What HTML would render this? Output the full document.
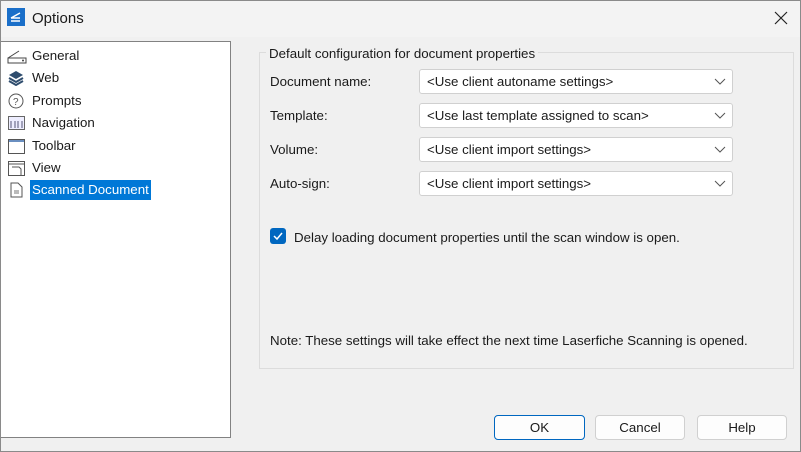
<!DOCTYPE html>
<html><head><style>
*{margin:0;padding:0;box-sizing:border-box}
body{width:801px;height:452px;background:#f0f0f0;font-family:"Liberation Sans",sans-serif;font-size:13.3px;color:#1a1a1a;position:relative;overflow:hidden;border:1px solid #8a8a8a}
.abs{position:absolute}
.title{left:0;top:0;width:799px;height:36px;background:#f3f3f3}
.tree{left:0px;top:40px;width:230px;height:397px;background:#fff;border:1px solid #828282;border-left:none}
.item{position:absolute;left:4px;height:20px;line-height:20px;white-space:nowrap}
.item span{position:absolute;left:25px;padding:0 2px}
.item svg{position:absolute;left:2px;top:2px}
.group{left:258px;top:51px;width:535px;height:317px;border:1px solid #dcdcdc}
.gt{left:265px;top:45px;background:#f0f0f0;padding:0 3px}
.lbl{left:269px}
.combo{left:418px;width:314px;height:25px;background:#fff;border:1px solid #d0d0d0;border-radius:3px;padding-left:7px;line-height:24px}
.combo svg{position:absolute;right:6px;top:8px}
.btn{top:414px;height:25px;background:#fdfdfd;border:1px solid #d0d0d0;border-radius:4px;text-align:center;line-height:24px}
</style></head><body>
<div class="abs title"></div>
<div class="abs" style="left:6px;top:7px;width:18px;height:18px;background:#1a6fc9"><svg width="18" height="18"><path d="M4 10 L13 5 M4 10 L13 10 M4 13 L13 13" stroke="#fff" stroke-width="1.5" fill="none"/></svg></div>
<div class="abs" style="left:31px;top:9px;font-size:15px">Options</div>
<svg class="abs" style="left:773px;top:10px" width="14" height="14"><path d="M1 1 L13 13 M13 1 L1 13" stroke="#222" stroke-width="1.2"/></svg>

<div class="abs tree">
<div class="item" style="top:4px"><svg width="20" height="16"><path d="M1 10 L12 3 M1 10 V15 H19 V10 Z" stroke="#444" fill="none"/><circle cx="16" cy="12.5" r="1" fill="#444"/></svg><span>General</span></div>
<div class="item" style="top:26px"><svg width="20" height="16"><path d="M2 5 L9 1 L16 5 L9 9 Z" fill="#2f4d6e"/><path d="M2 8 L9 12 L16 8 M2 11 L9 15 L16 11" stroke="#2f4d6e" stroke-width="2" fill="none"/></svg><span>Web</span></div>
<div class="item" style="top:49px"><svg width="20" height="16"><circle cx="9" cy="8" r="7" stroke="#555" fill="none"/><text x="6" y="12" font-size="10" fill="#555" font-family="Liberation Sans">?</text></svg><span>Prompts</span></div>
<div class="item" style="top:71px"><svg width="20" height="16"><rect x="1.5" y="1.5" width="16" height="13" stroke="#666" fill="#eef"/><path d="M4 6 V13 M8 6 V13 M11 6 V13 M15 6 V13" stroke="#557"/></svg><span>Navigation</span></div>
<div class="item" style="top:94px"><svg width="20" height="16"><rect x="1.5" y="1.5" width="16" height="14" stroke="#555" fill="#fff"/><path d="M2 3 H17" stroke="#6a8fc0" stroke-width="2"/></svg><span>Toolbar</span></div>
<div class="item" style="top:116px"><svg width="20" height="16"><rect x="1.5" y="1.5" width="16" height="14" stroke="#555" fill="#fff"/><path d="M2 4 H17 M5 7 H12 L14 9 V15" stroke="#555" fill="none"/></svg><span>View</span></div>
<div class="item" style="top:138px"><svg width="20" height="16"><path d="M4 1 H11 L15 5 V15 H4 Z" stroke="#555" fill="#fff"/><path d="M7 9 H12 M7 11 H12" stroke="#777"/></svg><span style="background:#0078d7;color:#fff">Scanned Document</span></div>
</div>

<div class="abs group"></div>
<div class="abs gt">Default configuration for document properties</div>
<div class="abs lbl" style="top:73px">Document name:</div>
<div class="abs lbl" style="top:107px">Template:</div>
<div class="abs lbl" style="top:141px">Volume:</div>
<div class="abs lbl" style="top:175px">Auto-sign:</div>
<div class="abs combo" style="top:68px">&lt;Use client autoname settings&gt;<svg width="12" height="8"><path d="M1 1 L6 6 L11 1" stroke="#555" fill="none"/></svg></div>
<div class="abs combo" style="top:102px">&lt;Use last template assigned to scan&gt;<svg width="12" height="8"><path d="M1 1 L6 6 L11 1" stroke="#555" fill="none"/></svg></div>
<div class="abs combo" style="top:136px">&lt;Use client import settings&gt;<svg width="12" height="8"><path d="M1 1 L6 6 L11 1" stroke="#555" fill="none"/></svg></div>
<div class="abs combo" style="top:170px">&lt;Use client import settings&gt;<svg width="12" height="8"><path d="M1 1 L6 6 L11 1" stroke="#555" fill="none"/></svg></div>
<div class="abs" style="left:269px;top:227px;width:16px;height:16px;background:#0067c0;border-radius:3px"><svg width="16" height="16"><path d="M4 8 L7 11 L12 5" stroke="#fff" stroke-width="1.5" fill="none"/></svg></div>
<div class="abs" style="left:293px;top:229px">Delay loading document properties until the scan window is open.</div>
<div class="abs" style="left:269px;top:332px">Note: These settings will take effect the next time Laserfiche Scanning is opened.</div>

<div class="abs btn" style="left:493px;width:91px;border:1px solid #0067c0">OK</div>
<div class="abs btn" style="left:594px;width:90px">Cancel</div>
<div class="abs btn" style="left:696px;width:90px">Help</div>
</body></html>
